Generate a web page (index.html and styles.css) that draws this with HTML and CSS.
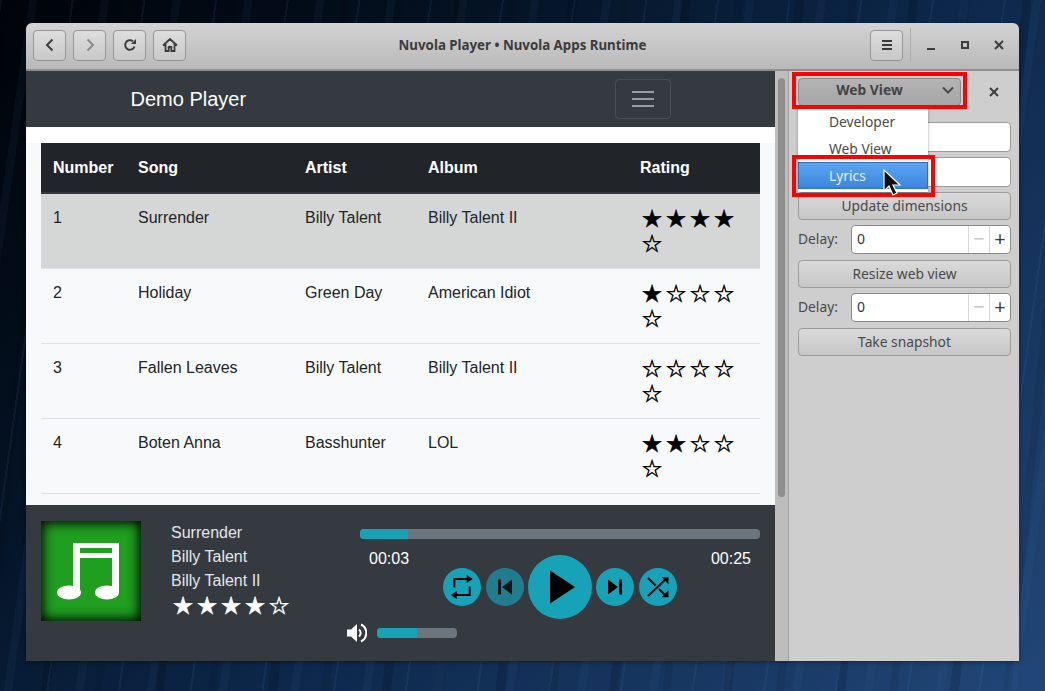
FILE: index.html
```html
<!DOCTYPE html>
<html lang="en">
<head>
  <meta charset="UTF-8" />
  <title>Nuvola Player</title>
  <link rel="stylesheet" href="styles.css">
</head>
<body>
  <div class="window">
    <header class="titlebar">
      <div class="nav-buttons">
        <button class="tool-btn"><svg width="16" height="16" viewBox="0 0 16 16"><path d="M10.500 2.500 5 8l5.500 5.500" fill="none" stroke="#3c3c3c" stroke-width="2"/></svg></button>
        <button class="tool-btn"><svg width="16" height="16" viewBox="0 0 16 16"><path d="M5.500 2.500 11 8l-5.500 5.500" fill="none" stroke="#8a8a8a" stroke-width="2"/></svg></button>
        <button class="tool-btn"><svg width="16" height="16" viewBox="0 0 16 16"><path d="M12.500 9.500A4.800 4.800 0 1 1 11 4.300" fill="none" stroke="#3c3c3c" stroke-width="2"/><path d="M9 7h5V2z" fill="#3c3c3c"/></svg></button>
        <button class="tool-btn"><svg width="16" height="16" viewBox="0 0 16 16"><path d="M1 8.500 8 2l7 6.500M3.500 7v7h3.200v-4h2.600v4h3.200V7" fill="none" stroke="#3c3c3c" stroke-width="1.800"/></svg></button>
      </div>
      <div class="title">Nuvola Player • Nuvola Apps Runtime</div>
      <button class="tool-btn"><svg width="16" height="16" viewBox="0 0 16 16"><path d="M3 3h10v2H3zM3 7h10v2H3zM3 11h10v2H3z" fill="#3c3c3c"/></svg></button>
      <div class="separator"></div>
      <div class="window-controls">
        <svg width="12" height="12" viewBox="0 0 12 12"><path d="M2 9h8v2H2z" fill="#3c3c3c"/></svg>
        <svg width="12" height="12" viewBox="0 0 12 12"><path d="M2 2h8v8H2zM4 4v4h4V4z" fill="#3c3c3c" fill-rule="evenodd"/></svg>
        <svg width="12" height="12" viewBox="0 0 12 12"><path d="M2 2l8 8M10 2l-8 8" stroke="#3c3c3c" stroke-width="2"/></svg>
      </div>
    </header>

    <div class="content">
      <main class="webview">
        <nav class="navbar">
          <span class="brand">Demo Player</span>
          <div class="toggler"><i></i><i></i><i></i></div>
        </nav>
        <div class="page">
          <table class="songs">
            <thead>
              <tr><th class="c1">Number</th><th class="c2">Song</th><th class="c3">Artist</th><th class="c4">Album</th><th class="c5">Rating</th></tr>
            </thead>
            <tbody>
              <tr class="active">
                <td>1</td><td>Surrender</td><td>Billy Talent</td><td>Billy Talent II</td>
                <td><div class="stars"><span>★</span><span>★</span><span>★</span><span>★</span><span>☆</span></div></td>
              </tr>
              <tr>
                <td>2</td><td>Holiday</td><td>Green Day</td><td>American Idiot</td>
                <td><div class="stars"><span>★</span><span>☆</span><span>☆</span><span>☆</span><span>☆</span></div></td>
              </tr>
              <tr>
                <td>3</td><td>Fallen Leaves</td><td>Billy Talent</td><td>Billy Talent II</td>
                <td><div class="stars"><span>☆</span><span>☆</span><span>☆</span><span>☆</span><span>☆</span></div></td>
              </tr>
              <tr>
                <td>4</td><td>Boten Anna</td><td>Basshunter</td><td>LOL</td>
                <td><div class="stars"><span>★</span><span>★</span><span>☆</span><span>☆</span><span>☆</span></div></td>
              </tr>
            </tbody>
          </table>
        </div>
        <footer class="player">
          <div class="cover">
            <svg width="64" height="57" viewBox="0 0 64 57">
              <path fill="#fff" fill-rule="evenodd" d="M17 0h46v49H56V15H24v34h-7zM24 5v5h32V5z"/>
              <ellipse cx="13" cy="49.500" rx="12" ry="7" fill="#fff"/>
              <ellipse cx="51" cy="49.500" rx="12" ry="7" fill="#fff"/>
            </svg>
          </div>
          <div class="track">
            <div>Surrender</div>
            <div>Billy Talent</div>
            <div>Billy Talent II</div>
            <div class="stars light"><span>★</span><span>★</span><span>★</span><span>★</span><span>☆</span></div>
          </div>
          <div class="controls">
            <div class="bar progress"><div class="bar-fill fill-progress"></div></div>
            <div class="times"><span>00:03</span><span>00:25</span></div>
            <div class="buttons">
              <button class="round"><svg width="26" height="26" viewBox="0 0 26 26"><path d="M5.300 13.500V5H19M20.700 12.500V21H7" fill="none" stroke="#000" stroke-width="2"/><path d="M17.700 1l6 4-6 4zM7.700 17l-6 4 6 4z"/></svg></button>
              <button class="round dim"><svg width="20" height="20" viewBox="0 0 20 20"><path d="M3 2.500h3v15H3zM17 2.500v15L7 10z"/></svg></button>
              <button class="round big"><svg width="30" height="34" viewBox="0 0 30 34"><path d="M5 .500v33L30 17z"/></svg></button>
              <button class="round"><svg width="20" height="20" viewBox="0 0 20 20"><path d="M14 2.500h3v15h-3zM3 2.500v15L13 10z"/></svg></button>
              <button class="round"><svg width="26" height="26" viewBox="0 0 26 26"><path d="M3 22 21 5M3 4l7.500 7.500M14 15l7 7" fill="none" stroke="#000" stroke-width="2"/><path d="M16.500 3.300h7v7zM16.500 23.300h7v-7z"/></svg></button>
            </div>
            <div class="volume">
              <svg width="21" height="20" viewBox="0 0 21 20"><path fill="#fff" d="M1 6.500h4L11 1v18l-6-5.500H1z"/><path d="M13 6.500a4.500 4.500 0 0 1 0 7M15 1.500a9.500 9.500 0 0 1 0 17" fill="none" stroke="#fff" stroke-width="2"/></svg>
              <div class="bar short"><div class="bar-fill fill-volume"></div></div>
            </div>
          </div>
        </footer>
      </main>

      <div class="scrollbar"><div class="thumb"></div></div>

      <aside class="sidebar">
        <div class="side-head">
          <button class="combo"><span>Web View</span><svg width="12" height="8" viewBox="0 0 12 8"><path d="M1 1.500 6 6.500l5-5" fill="none" stroke="#4a4a4a" stroke-width="2"/></svg></button>
          <svg class="side-close" width="10" height="10" viewBox="0 0 10 10"><path d="M1 1l8 8M9 1 1 9" stroke="#3c3c3c" stroke-width="2"/></svg>
        </div>
        <input class="entry" type="text">
        <input class="entry" type="text">
        <button class="side-btn">Update dimensions</button>
        <div class="delay">
          <label>Delay:</label>
          <div class="spin"><span class="spin-val">0</span><span class="spin-btn off">−</span><span class="spin-btn">+</span></div>
        </div>
        <button class="side-btn">Resize web view</button>
        <div class="delay">
          <label>Delay:</label>
          <div class="spin"><span class="spin-val">0</span><span class="spin-btn off">−</span><span class="spin-btn">+</span></div>
        </div>
        <button class="side-btn">Take snapshot</button>

        <ul class="popup">
          <li>Developer</li>
          <li>Web View</li>
          <li class="selected">Lyrics</li>
        </ul>
      </aside>
    </div>

    <div class="mark mark-combo"></div>
    <div class="mark mark-lyrics"></div>
    <svg class="cursor" width="18" height="28" viewBox="0 0 18 28"><path d="M1 1v21l5-5 4 9 4-2-4-8h7z" fill="#111" stroke="#fff" stroke-width="1.200"/></svg>
  </div>
</body>
</html>
```

FILE: styles.css
```css
* {
  box-sizing: border-box;
}
body {
  margin: 0;
  height: 691px;
  overflow: hidden;
  padding: 23px 26px 30px;
  font-family: 'Liberation Sans', Arial, sans-serif;
  background:
    repeating-linear-gradient(98deg, rgba(90, 140, 210, 0.09) 0 2px, transparent 2px 29px, rgba(90, 140, 210, 0.05) 29px 37px, transparent 37px 71px),
    repeating-linear-gradient(96deg, rgba(0, 0, 0, 0.14) 0 9px, transparent 9px 53px, rgba(0, 0, 0, 0.08) 53px 61px, transparent 61px 113px),
    linear-gradient(135deg, #000309 0%, #03101f 25%, #0c274a 55%, #173660 78%, #214778 100%);
}
button {
  font-family: inherit;
  margin: 0;
}

.window {
  position: relative;
  width: 993px;
  height: 638px;
  border-radius: 6px 6px 0 0;
  overflow: hidden;
  box-shadow: 0 1px 4px rgba(0, 0, 0, 0.4);
  display: flex;
  flex-direction: column;
}

/* title bar */
.titlebar {
  height: 48px;
  flex: none;
  display: flex;
  align-items: center;
  padding: 0 7px 2px;
  background: linear-gradient(#d3d3d3, #b9b9b9);
  border-bottom: 2px solid #8e8e8e;
}
.nav-buttons {
  display: flex;
  gap: 7px;
}
.tool-btn {
  width: 33px;
  height: 31px;
  padding: 0;
  display: flex;
  align-items: center;
  justify-content: center;
  border: 1px solid #969696;
  border-radius: 4px;
  background: linear-gradient(#dedede, #c8c8c8);
}
.title {
  flex: 1;
  text-align: center;
  padding-right: 11px;
  font-family: 'Noto Sans', sans-serif;
  font-size: 13.300px;
  font-weight: 700;
  color: #3c3c3c;
}
.separator {
  width: 1px;
  height: 34px;
  margin: 0 7px;
  background: #adadad;
}
.window-controls {
  display: flex;
  gap: 22px;
  padding: 0 7px;
}

.content {
  flex: 1;
  display: flex;
  min-height: 0;
}

/* web view */
.webview {
  width: 749px;
  display: flex;
  flex-direction: column;
  background: #f8f9fa;
}
.navbar {
  height: 56px;
  flex: none;
  display: flex;
  align-items: center;
  justify-content: space-between;
  padding: 0 104px 0 104.500px;
  background: #343a40;
}
.brand {
  font-size: 20px;
  color: #fff;
}
.toggler {
  width: 56px;
  height: 40px;
  padding: 11px 16px;
  display: flex;
  flex-direction: column;
  justify-content: space-between;
  border: 1px solid rgba(255, 255, 255, 0.1);
  border-radius: 4px;
}
.toggler i {
  display: block;
  height: 2px;
  background: rgba(255, 255, 255, 0.5);
}
.page {
  flex: 1;
  padding: 16px 15px 0;
  background: linear-gradient(#fff 16px, #f8f9fa 16px);
  min-height: 0;
}
.songs {
  width: 719px;
  border-collapse: collapse;
  table-layout: fixed;
  font-size: 16px;
  line-height: 24px;
  color: #212529;
}
.songs th {
  height: 50px;
  padding: 0 12px;
  text-align: left;
  color: #fff;
  background: #212529;
  border-bottom: 2px solid #32383e;
}
.c1 { width: 85px; }
.c2 { width: 167px; }
.c3 { width: 123px; }
.c4 { width: 212px; }
.c5 { width: 132px; }
.songs td {
  height: 75px;
  padding: 12px 12px 10px;
  vertical-align: top;
  border-bottom: 1px solid #dee2e6;
}
.songs .active td {
  background: #d5d7d6;
}
.stars {
  display: flex;
  flex-wrap: wrap;
  font-family: 'DejaVu Sans', sans-serif;
  font-size: 24px;
  line-height: 25px;
  color: #000;
  -webkit-text-stroke: 0.5px currentColor;
}
.songs .stars {
  margin-top: 1px;
}
.stars span {
  width: 24px;
  text-align: center;
}

/* player */
.player {
  height: 156px;
  flex: none;
  display: flex;
  padding: 16px 15px 0;
  background: #343a40;
  color: #e4e6e8;
}
.cover {
  width: 100px;
  height: 100px;
  flex: none;
  padding: 1px 6px 0 0;
  display: flex;
  align-items: center;
  justify-content: center;
  background: #1f9e1f;
  box-shadow: inset 0 0 12px 2px #000;
}
.track {
  width: 219px;
  flex: none;
  padding-left: 30px;
  font-size: 16px;
  line-height: 24px;
}
.stars.light {
  color: #fff;
  margin-top: 1px;
}
.controls {
  flex: 1;
  display: flex;
  flex-direction: column;
  padding-top: 8px;
}
.bar {
  height: 10px;
  border-radius: 4px;
  overflow: hidden;
  background: #6c757d;
}
.bar-fill {
  height: 100%;
  background: #17a2b8;
}
.fill-progress { width: 12%; }
.fill-volume { width: 50%; }
.times {
  display: flex;
  justify-content: space-between;
  padding: 0 9px;
  margin-top: 10px;
  height: 20px;
  font-size: 16px;
  line-height: 20px;
  color: #fff;
}
.buttons {
  display: flex;
  align-items: center;
  justify-content: center;
  gap: 5px;
  margin-top: -14px;
  height: 64px;
}
.round {
  width: 38px;
  height: 38px;
  padding: 0;
  display: flex;
  align-items: center;
  justify-content: center;
  border: none;
  border-radius: 50%;
  background: #17a2b8;
}
.round.dim {
  opacity: 0.65;
}
.round.big {
  width: 64px;
  height: 64px;
  margin: 0 -1px;
}
.volume {
  display: flex;
  align-items: center;
  gap: 10px;
  margin-left: -14px;
  margin-top: 4px;
}
.bar.short {
  width: 80px;
}

.scrollbar {
  width: 14px;
  padding: 7px 3px 0;
  background: #bdbdbd;
  border-right: 1px solid #a2a2a2;
}
.thumb {
  height: 419px;
  border-radius: 4px;
  background: #8f8f8f;
}

/* side pane */
.sidebar {
  position: relative;
  flex: 1;
  display: flex;
  flex-direction: column;
  padding: 7px 8px 0 9px;
  background: #cecece;
  font-family: 'Noto Sans', sans-serif;
  font-size: 13.800px;
  color: #4a4a4a;
}
.side-head {
  display: flex;
  align-items: center;
  justify-content: space-between;
  height: 28px;
  padding-right: 12px;
  margin-bottom: 16px;
}
.combo {
  width: 163px;
  height: 28px;
  padding: 0 6px 0 0;
  display: flex;
  align-items: center;
  border: 1px solid #8a8a8a;
  border-radius: 4px;
  background: linear-gradient(#b4b4b4, #a6a6a6);
  font-family: 'Noto Sans', sans-serif;
  font-size: 13.800px;
  font-weight: 700;
  color: #444;
}
.combo span {
  flex: 1;
  text-align: center;
  padding: 0 2px 5px 0;
}
.combo svg {
  margin-bottom: 5px;
}
.entry {
  height: 30px;
  margin-bottom: 5px;
  border: 1px solid #9a9a9a;
  border-radius: 4px;
  background: #fff;
}
.side-btn {
  height: 28px;
  padding: 0 0 2px;
  border: 1px solid #9c9c9c;
  border-radius: 4px;
  background: linear-gradient(#dadada, #c6c6c6);
  font-family: 'Noto Sans', sans-serif;
  font-size: 13.800px;
  color: #4a4a4a;
}
.delay {
  display: flex;
  align-items: center;
  justify-content: space-between;
  height: 29px;
  margin: 5px 0 6px;
}
.delay label {
  padding-bottom: 2px;
}
.spin {
  width: 160px;
  height: 29px;
  display: flex;
  align-items: center;
  border: 1px solid #8a8a8a;
  border-radius: 4px;
  background: #fff;
}
.spin-val {
  flex: 1;
  padding: 0 0 2px 5px;
  font-size: 14px;
  color: #333;
}
.spin-btn {
  width: 21px;
  height: 27px;
  border-left: 1px solid #d8d8d8;
  text-align: center;
  font-size: 20px;
  line-height: 26px;
  color: #3c3c3c;
}
.spin-btn.off {
  color: #c8c8c8;
}
.popup {
  position: absolute;
  left: 9px;
  top: 37px;
  width: 130px;
  margin: 0;
  padding: 0;
  list-style: none;
  background: #fff;
  box-shadow: 0 1px 3px rgba(0, 0, 0, 0.35);
}
.popup li {
  height: 27px;
  padding-left: 31px;
  line-height: 27px;
}
.popup .selected {
  margin-bottom: 3px;
  color: #e6f1ff;
  border: 1px solid #2f6db5;
  line-height: 25px;
  padding-left: 30px;
  background: linear-gradient(#5ca4f2, #3b86dd);
}

/* annotations over the shot */
.mark {
  position: absolute;
  border: 4px solid #f00;
}
.mark-combo {
  left: 766px;
  top: 49px;
  width: 175px;
  height: 37px;
}
.mark-lyrics {
  left: 766px;
  top: 132px;
  width: 143px;
  height: 42px;
}
.cursor {
  position: absolute;
  left: 857px;
  top: 146px;
}
```
